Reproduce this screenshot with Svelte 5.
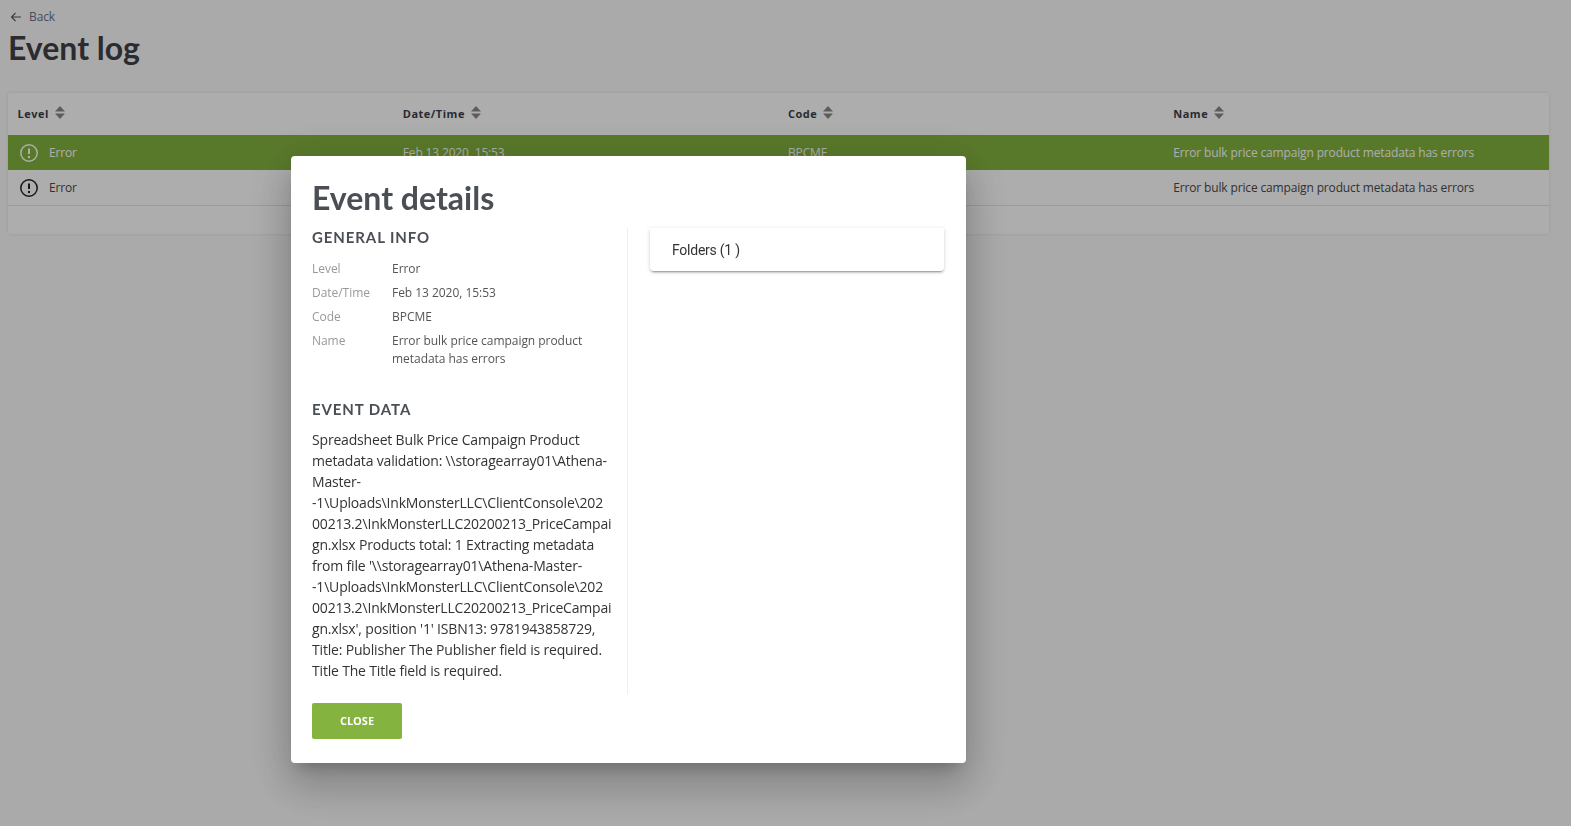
<script>
  const columns = ['Level', 'Date/Time', 'Code', 'Name'];
  const eventName = 'Error bulk price campaign product metadata has errors';
  const rows = [
    { level: 'Error', date: 'Feb 13 2020, 15:53', code: 'BPCME', name: eventName, selected: true },
    { level: 'Error', date: 'Feb 13 2020, 15:53', code: 'BPCME', name: eventName, selected: false }
  ];
  const info = [
    ['Level', 'Error'],
    ['Date/Time', 'Feb 13 2020, 15:53'],
    ['Code', 'BPCME'],
    ['Name', eventName]
  ];
  // the long paths break mid-word, so the lines are kept as they appear
  const eventData = [
    'Spreadsheet Bulk Price Campaign Product',
    'metadata validation: \\\\storagearray01\\Athena-',
    'Master-',
    '-1\\Uploads\\InkMonsterLLC\\ClientConsole\\202',
    '00213.2\\InkMonsterLLC20200213_PriceCampai',
    'gn.xlsx Products total: 1 Extracting metadata',
    "from file '\\\\storagearray01\\Athena-Master-",
    '-1\\Uploads\\InkMonsterLLC\\ClientConsole\\202',
    '00213.2\\InkMonsterLLC20200213_PriceCampai',
    "gn.xlsx', position '1' ISBN13: 9781943858729,",
    'Title: Publisher The Publisher field is required.',
    'Title The Title field is required.'
  ];
</script>

<main class="page">
  <a class="back" href="#back">
    <svg width="12" height="12" viewBox="0 0 12 12" fill="none" stroke="currentColor" stroke-width="1.1">
      <path d="M11 6H1.5M5.5 2 1.5 6l4 4" />
    </svg>
    <span>Back</span>
  </a>
  <h1>Event log</h1>

  <section class="table">
    <div class="row head">
      {#each columns as col}
        <div class="cell">
          {col}
          <svg class="sort" width="10" height="13" viewBox="0 0 10 13" fill="currentColor">
            <path d="M5 0 10 5.500H0ZM0 7.500H10L5 13Z" />
          </svg>
        </div>
      {/each}
    </div>
    {#each rows as row}
      <div class="row body" class:selected={row.selected}>
        <div class="cell level">
          <svg width="20" height="20" viewBox="0 0 20 20" fill="none" stroke="currentColor" stroke-width="1.5">
            <circle cx="10" cy="10" r="8.200" />
            <path d="M10 5.500V11" stroke-width="2" />
            <circle cx="10" cy="14" r="1.200" fill="currentColor" stroke="none" />
          </svg>
          {row.level}
        </div>
        <div class="cell">{row.date}</div>
        <div class="cell">{row.code}</div>
        <div class="cell">{row.name}</div>
      </div>
    {/each}
    <div class="table-foot"></div>
  </section>
</main>

<div class="overlay"></div>

<div class="dialog">
  <h2>Event details</h2>
  <div class="columns">
    <div class="left">
      <h3>General info</h3>
      <dl>
        {#each info as [label, value]}
          <dt>{label}</dt>
          <dd>{value}</dd>
        {/each}
      </dl>
      <h3 class="second">Event data</h3>
      <p>
        {#each eventData as line}
          <span>{line}</span>
        {/each}
      </p>
    </div>
    <div class="right">
      <div class="panel">Folders (1 )</div>
    </div>
  </div>
  <button>CLOSE</button>
</div>

<style>
  :global(body) {
    margin: 0;
    background: #fbfbfb;
    font-family: "Open Sans", sans-serif;
    color: #333;
    overflow: hidden;
  }

  .page {
    height: 826px;
    padding: 9px 22px 0 8px;
    box-sizing: border-box;
  }

  .back {
    display: flex;
    align-items: center;
    gap: 7px;
    height: 15px;
    padding-left: 2px;
    font-size: 12px;
    letter-spacing: -0.1px;
    color: #6b7280;
    text-decoration: none;
  }

  .back svg {
    color: #555;
  }

  h1 {
    margin: 6px 0 27px 0;
    font-family: Lato, "Open Sans", sans-serif;
    font-size: 32px;
    line-height: 36px;
    font-weight: 700;
    color: #3f4148;
  }

  .table {
    background: #fff;
    box-shadow: 0 0 3px rgba(0, 0, 0, 0.12);
    border-radius: 2px;
  }

  .row {
    display: grid;
    grid-template-columns: repeat(4, 1fr);
    align-items: center;
  }

  .cell {
    padding-left: 9.500px;
  }

  .head {
    height: 42px;
    padding-bottom: 2px;
    box-sizing: border-box;
    font-size: 11px;
    font-weight: 700;
    letter-spacing: 0.5px;
    color: #3c3f4a;
  }

  .head .cell {
    display: flex;
    align-items: center;
    gap: 6px;
  }

  .sort {
    color: #8a8a8a;
    margin-top: -2px;
  }

  .body {
    height: 35px;
    font-size: 12px;
    letter-spacing: -0.15px;
    color: #4a4a4a;
    border-bottom: 1px solid #e4e4e4;
  }

  .body.selected {
    background: #84b33f;
    color: #fff;
    border-bottom: 0;
  }

  .level {
    display: flex;
    align-items: center;
    gap: 10px;
    padding-left: 11px;
  }

  .level svg {
    color: #222;
  }

  .selected .level svg {
    color: #fff;
  }

  .table-foot {
    height: 28px;
  }

  .overlay {
    position: fixed;
    inset: 0;
    background: rgba(0, 0, 0, 0.32);
  }

  .dialog {
    position: fixed;
    left: 291px;
    top: 156px;
    width: 675px;
    height: 607px;
    box-sizing: border-box;
    padding: 23px 22px 24px 21px;
    background: #fff;
    border-radius: 4px;
    box-shadow: 0 11px 15px -7px rgba(0, 0, 0, 0.2), 0 24px 38px 3px rgba(0, 0, 0, 0.14), 0 9px 46px 8px rgba(0, 0, 0, 0.12);
  }

  h2 {
    margin: 0 0 11px;
    font-family: Lato, "Open Sans", sans-serif;
    font-size: 32px;
    line-height: 38px;
    font-weight: 700;
    color: #4a4e55;
  }

  .columns {
    display: flex;
    height: 466px;
  }

  .left {
    width: 316px;
    padding-right: 16px;
    box-sizing: border-box;
    border-right: 1px solid #eee;
  }

  h3 {
    margin: 0 0 14px;
    font-family: Lato, "Open Sans", sans-serif;
    font-size: 15px;
    line-height: 18px;
    font-weight: 700;
    letter-spacing: 0.9px;
    text-transform: uppercase;
    color: #4a4e55;
  }

  h3.second {
    margin: 32px 0 11px;
  }

  dl {
    display: grid;
    grid-template-columns: 80px 1fr;
    row-gap: 6px;
    margin: 0;
    font-size: 12px;
    letter-spacing: -0.04px;
    line-height: 18px;
  }

  dt {
    color: #999;
  }

  dd {
    margin: 0;
    color: #555;
  }

  p {
    margin: -0.500px 0 0;
    font-size: 14px;
    letter-spacing: -0.18px;
    line-height: 21px;
    color: #333;
  }

  p span {
    display: block;
    white-space: nowrap;
  }

  .right {
    flex: 1;
    padding-left: 22px;
  }

  .panel {
    height: 43px;
    padding-left: 22px;
    line-height: 45px;
    font-family: Roboto, sans-serif;
    font-size: 14px;
    letter-spacing: -0.25px;
    color: #333;
    border-radius: 0 0 4px 4px;
    background: #fff;
    box-shadow: 0 3px 1px -2px rgba(0, 0, 0, 0.2), 0 2px 2px 0 rgba(0, 0, 0, 0.14), 0 1px 5px 0 rgba(0, 0, 0, 0.12);
  }

  button {
    display: block;
    width: 90px;
    height: 36px;
    margin-top: 9px;
    padding: 0 0 2px;
    border: 0;
    border-radius: 2px;
    background: #84b33f;
    color: #fff;
    font-family: "Open Sans", sans-serif;
    font-size: 11px;
    font-weight: 700;
  }
</style>
